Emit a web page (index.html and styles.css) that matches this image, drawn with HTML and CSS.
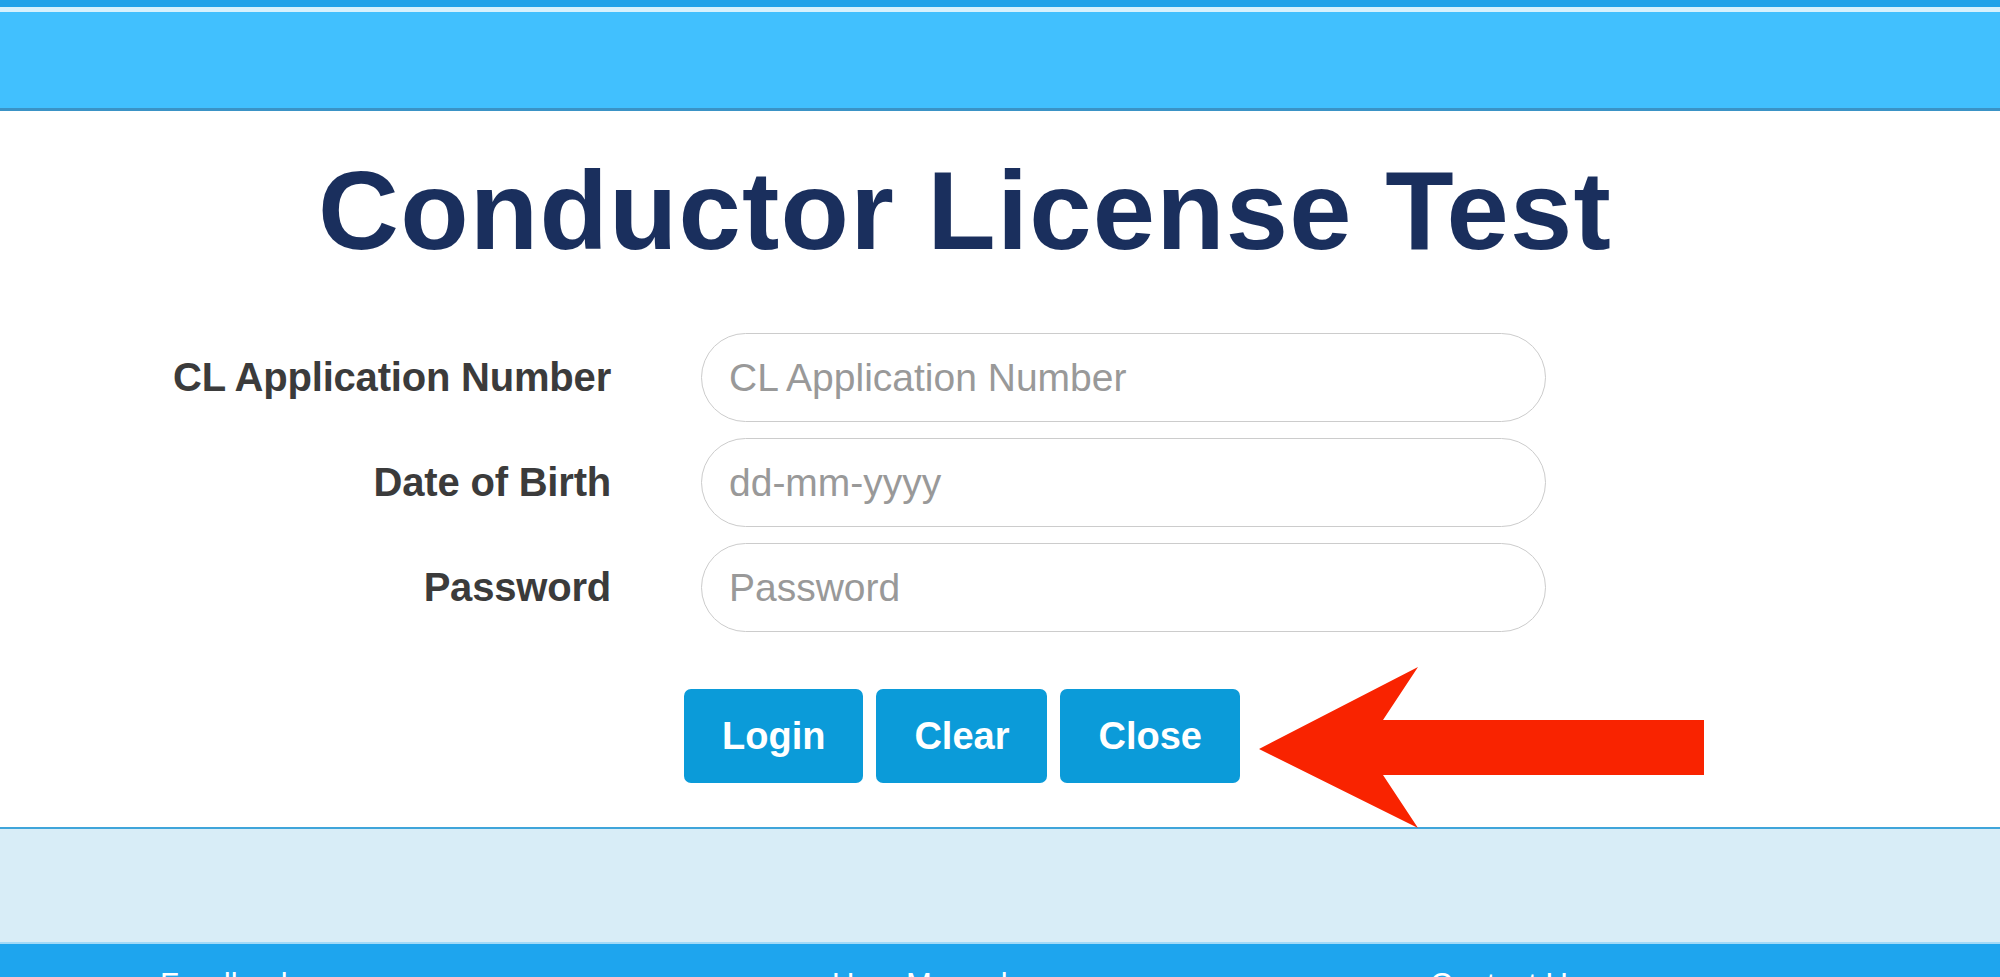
FILE: index.html
```html
<!DOCTYPE html>
<html lang="en">
<head>
<meta charset="utf-8">
<title>Conductor License Test</title>
<link rel="stylesheet" href="styles.css">
</head>
<body>
<header class="topbar"><div class="topbar-inner"></div></header>
<main class="main">
  <div class="content">
    <h1 class="title">Conductor License Test</h1>
    <form class="form">
      <label class="label" for="appno">CL Application Number</label>
      <input class="field" id="appno" type="text" placeholder="CL Application Number">
      <label class="label" for="dob">Date of Birth</label>
      <input class="field" id="dob" type="text" placeholder="dd-mm-yyyy">
      <label class="label" for="pwd">Password</label>
      <input class="field" id="pwd" type="password" placeholder="Password">
    </form>
    <div class="actions">
      <button class="btn" type="button">Login</button>
      <button class="btn" type="button">Clear</button>
      <button class="btn" type="button">Close</button>
    </div>
  </div>
  <svg class="arrow" width="445" height="161" viewBox="0 0 445 161" aria-hidden="true">
    <polygon points="0,82 159,0 124,53 445,53 445,108 124,108 159,161" fill="#f92300"/>
  </svg>
</main>
<div class="band"></div>
<footer class="footer">
  <span class="flink">Feedback</span>
  <span class="flink">User Manual</span>
  <span class="flink">Contact Us</span>
</footer>
</body>
</html>
```
FILE: styles.css
```css
html, body {
  margin: 0;
  padding: 0;
  overflow: hidden;
}
body {
  font-family: "Liberation Sans", Arial, sans-serif;
  background: #ffffff;
  height: 977px;
}
.topbar {
  border-top: 7px solid #1fa2e9;
  border-bottom: 3px solid #3a93c6;
  background: #d6f1fd;
  padding-top: 5px;
}
.topbar-inner {
  height: 96px;
  background: #41c0fe;
}
.main {
  position: relative;
  background: #ffffff;
  padding: 44px 0 44px 0;
}
.content {
  width: 1930px;
}
.title {
  margin: 0;
  text-align: center;
  font-size: 112px;
  line-height: 112px;
  font-weight: 700;
  letter-spacing: 1.2px;
  color: #1a2f5d;
}
.form {
  margin-top: 66px;
  display: grid;
  grid-template-columns: 611px 845px;
  column-gap: 90px;
  row-gap: 16px;
  align-items: center;
}
.label {
  text-align: right;
  font-size: 40px;
  font-weight: 700;
  letter-spacing: -0.2px;
  color: #3b3b3b;
}
.field {
  box-sizing: border-box;
  height: 89px;
  width: 845px;
  margin: 0;
  border: 1.5px solid #cccccc;
  border-radius: 45px;
  padding: 0 27px;
  font-family: "Liberation Sans", Arial, sans-serif;
  font-size: 39px;
  color: #555555;
  background: #ffffff;
  outline: none;
}
.field::placeholder {
  color: #999999;
  opacity: 1;
}
.actions {
  margin-top: 57px;
  margin-left: 684px;
  display: flex;
  gap: 13px;
}
.btn {
  height: 94px;
  padding: 0 38px;
  border: 0;
  border-radius: 7px;
  background: #0b9bd9;
  color: #ffffff;
  font-family: "Liberation Sans", Arial, sans-serif;
  font-size: 38px;
  font-weight: 700;
  cursor: pointer;
}
.arrow {
  position: absolute;
  left: 1259px;
  top: 556px;
  display: block;
}
.band {
  height: 113px;
  border-top: 2px solid #3fa5da;
  background: #d8edf7;
}
.footer {
  border-top: 2px solid #a3daf7;
  background: #1ea5ee;
  height: 35px;
  overflow: hidden;
  padding-top: 25px;
  padding-left: 160px;
  display: grid;
  grid-template-columns: 672px 598px auto;
  align-items: start;
  box-sizing: border-box;
}
.flink {
  color: #ffffff;
  font-size: 31px;
  line-height: 31px;
}
```
